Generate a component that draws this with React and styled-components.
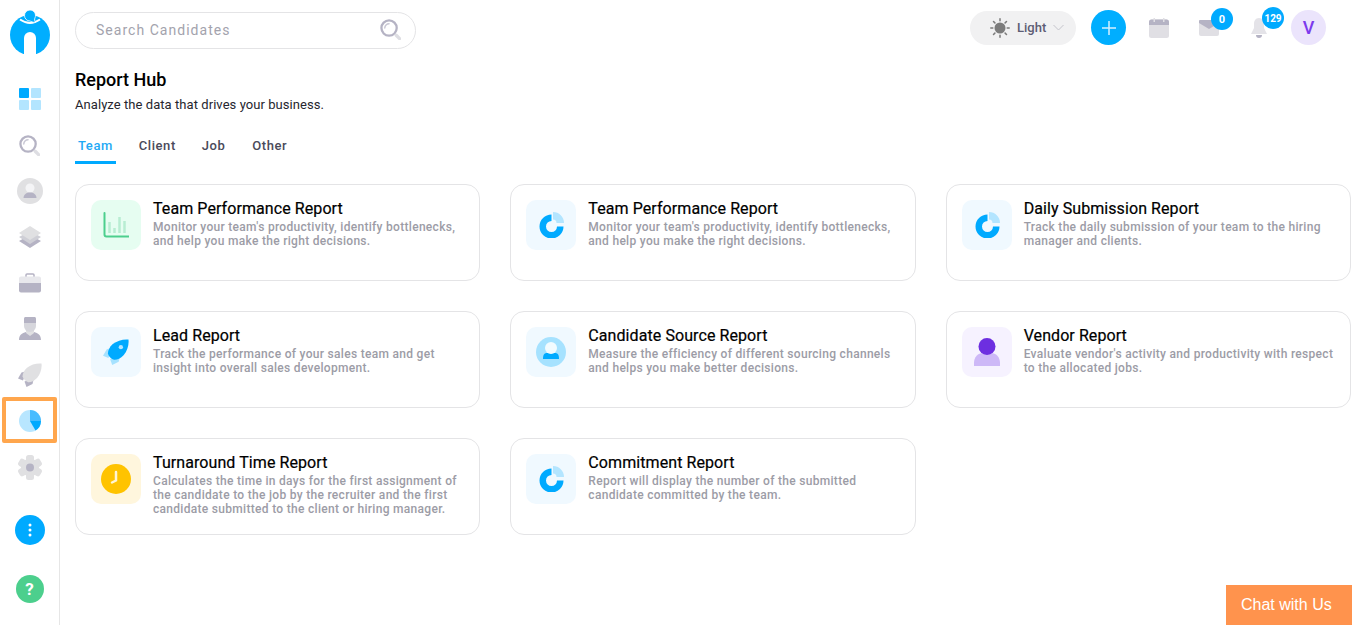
import React from "react";
import styled, { createGlobalStyle } from "styled-components";

const GlobalStyle = createGlobalStyle`
  html, body {
    margin: 0;
    padding: 0;
    background: #fff;
    font-family: Roboto, "Liberation Sans", sans-serif;
  }
  * { box-sizing: border-box; }
`;

const Page = styled.div`
  display: flex;
  width: 1366px;
  height: 625px;
  overflow: hidden;
  position: relative;
`;

const Sidebar = styled.aside`
  width: 60px;
  flex: none;
  border-right: 1px solid #e6e6e6;
  display: flex;
  flex-direction: column;
  align-items: center;
`;

const Logo = styled.div`
  height: 75px;
  padding-top: 10px;
`;

const NavItem = styled.div`
  width: 55px;
  height: 46px;
  padding-top: 2px;
  display: flex;
  align-items: center;
  justify-content: center;
  border: ${(p) => (p.$active ? "4px solid #ffa64d" : "none")};
  border-radius: 2px;
`;

const NavFooter = styled.div`
  margin-top: 26px;
  display: flex;
  flex-direction: column;
  align-items: center;
  gap: 30px;
`;

const RoundBtn = styled.div`
  width: ${(p) => p.$size}px;
  height: ${(p) => p.$size}px;
  border-radius: 50%;
  background: ${(p) => p.$bg};
  font-size: ${(p) => p.$fs || 14}px;
  display: flex;
  align-items: center;
  justify-content: center;
  color: #fff;
  font-weight: 700;
`;

const Main = styled.main`
  flex: 1;
  padding: 12px 15px 0;
  min-width: 0;
`;

const Topbar = styled.header`
  display: flex;
  align-items: flex-start;
  height: 37px;
`;

const Search = styled.div`
  width: 341px;
  height: 37px;
  border: 1px solid #e4e4e6;
  border-radius: 19px;
  display: flex;
  align-items: center;
  justify-content: space-between;
  padding: 0 14px 2px 20px;
  color: #a3a3ad;
  font-size: 14px;
  letter-spacing: 1.03px;
`;

const TopRight = styled.div`
  margin-left: auto;
  margin-right: 25px;
  margin-top: -2px;
  display: flex;
  align-items: center;
`;

const ThemeToggle = styled.div`
  width: 106px;
  height: 34px;
  border-radius: 17px;
  background: #f1f1f2;
  display: flex;
  align-items: center;
  padding-left: 20px;
  color: #5d5d74;
  font-size: 13px;
  font-weight: 500;
  margin-right: 15px;
  gap: 7px;
`;

const TopIcon = styled.div`
  position: relative;
  width: ${(p) => p.$w}px;
  margin-left: ${(p) => p.$ml}px;
  height: 35px;
  display: flex;
  align-items: center;
  justify-content: center;
`;

const Badge = styled.span`
  position: absolute;
  top: ${(p) => p.$top}px;
  left: ${(p) => p.$left}px;
  width: 22px;
  height: 22px;
  border-radius: 50%;
  background: #00aaff;
  color: #fff;
  font-size: ${(p) => p.$fs}px;
  font-weight: 700;
  display: flex;
  align-items: center;
  justify-content: center;
`;

const Avatar = styled.div`
  width: 35px;
  height: 35px;
  border-radius: 50%;
  background: #ebe4fc;
  color: #7c3aed;
  font-size: 18px;
  font-weight: 500;
  display: flex;
  align-items: center;
  justify-content: center;
  margin-left: 24px;
`;

const Title = styled.h1`
  margin: 20px 0 0;
  font-size: 18px;
  line-height: 22px;
  font-weight: 500;
  color: #000;
`;

const Subtitle = styled.p`
  margin: 5px 0 0;
  font-size: 13px;
  line-height: 18px;
  letter-spacing: 0.06px;
  color: #26262e;
`;

const Tabs = styled.nav`
  display: flex;
  margin-top: 17px;
  height: 33px;
`;

const Tab = styled.div`
  padding: 0 3px;
  margin-right: ${(p) => p.$mr}px;
  height: 33px;
  line-height: 30px;
  font-size: 13px;
  font-weight: 500;
  letter-spacing: 0.55px;
  color: ${(p) => (p.$active ? "#1fa9f5" : "#4a4a5a")};
  border-bottom: 3px solid ${(p) => (p.$active ? "#00aaff" : "transparent")};
`;

const Grid = styled.section`
  display: grid;
  grid-template-columns: repeat(3, 1fr);
  gap: 30px;
  margin-top: 20px;
`;

const Card = styled.article`
  height: 97px;
  border: 1px solid #e4e4e6;
  border-radius: 14px;
  padding: 15px;
  display: flex;
  gap: 12px;
`;

const IconBox = styled.div`
  width: 50px;
  height: 50px;
  flex: none;
  border-radius: 10px;
  background: ${(p) => p.$bg};
  display: flex;
  align-items: center;
  justify-content: center;
`;

const CardBody = styled.div`
  margin-top: -1px;
  min-width: 0;
`;

const CardTitle = styled.h3`
  margin: 0;
  font-size: 16px;
  line-height: 19px;
  font-weight: 400;
  letter-spacing: 0.08px;
  color: #000;
  -webkit-text-stroke: 0.2px #000;
`;

const CardText = styled.p`
  margin: 2px 0 0;
  font-size: 12px;
  line-height: 14px;
  font-weight: 500;
  letter-spacing: 0.3px;
  color: #9c9ca6;
`;

const ChatButton = styled.div`
  position: absolute;
  left: 1226px;
  top: 585px;
  width: 126px;
  height: 40px;
  padding-left: 15px;
  background: #ff934d;
  color: #fff;
  font-family: "Liberation Sans", Arial, sans-serif;
  font-size: 16px;
  display: flex;
  align-items: center;
`;

const LogoIcon = () => (
  <svg width="40" height="46" viewBox="0 0 40 46">
    <circle cx="20" cy="25" r="20" fill="#00aeff" />
    <path d="M14 46V28a6 6 0 0 1 12 0v18z" fill="#fff" />
    <path d="M10 9.500c3 2 6.500 3.500 10 3.500s7-1.500 10-3.500" fill="none" stroke="#fff" strokeWidth="2" />
    <path d="M20 0a5.500 5.500 0 0 1 5 7.800c-.6 1.300-.6 3 .5 4.700-2.500-.2-4.500-1-5.500-1.500a5.500 5.500 0 0 1 0-11z" fill="#00aeff" stroke="#fff" strokeWidth=".8" />
  </svg>
);

const Dashboard = () => (
  <svg width="22" height="22" viewBox="0 0 22 22">
    <rect width="10" height="10" rx="1" fill="#00aaff" />
    <rect x="12" width="10" height="10" rx="1" fill="#b3e5ff" />
    <rect y="12" width="10" height="10" rx="1" fill="#b3e5ff" />
    <rect x="12" y="12" width="10" height="10" rx="1" fill="#b3e5ff" />
  </svg>
);

const SearchIcon = () => (
  <svg width="21" height="21" viewBox="0 0 22 22" fill="none">
    <circle cx="9.500" cy="9.500" r="8" stroke="#b5b3c4" strokeWidth="2.400" />
    <path d="M5 9.500A4.500 4.500 0 0 1 9.500 5" stroke="#c9c8d4" strokeWidth="1.500" strokeLinecap="round" />
    <path d="M17 17l3.500 3.500" stroke="#dedee3" strokeWidth="3.500" strokeLinecap="round" />
  </svg>
);

const Candidate = () => (
  <svg width="26" height="26" viewBox="0 0 26 26">
    <circle cx="13" cy="13" r="13" fill="#e0e0e2" />
    <circle cx="13" cy="10" r="4.500" fill="#f4f4f6" />
    <path d="M6.500 20c0-3.500 3-5.500 6.500-5.500s6.500 2 6.500 5.500z" fill="#b5b3c4" />
  </svg>
);

const Layers = () => (
  <svg width="22" height="23" viewBox="0 0 22 23">
    <path d="M11 9 22 15 11 22 0 15z" fill="#b5b3c4" />
    <path d="M11 5 22 11 11 18 0 11z" fill="#cfcfd6" />
    <path d="M0 7 11 0l11 7-11 7z" fill="#e0e0e2" />
  </svg>
);

const Briefcase = () => (
  <svg width="22" height="20" viewBox="0 0 22 20">
    <path d="M7 4V2a1 1 0 0 1 1-1h6a1 1 0 0 1 1 1v2" fill="none" stroke="#b5b3c4" strokeWidth="1.500" />
    <path d="M2 3.500h18a2 2 0 0 1 2 2V10H0V5.500a2 2 0 0 1 2-2z" fill="#e8e8ec" />
    <path d="M0 10h22v7.500a2 2 0 0 1-2 2H2a2 2 0 0 1-2-2z" fill="#b5b3c4" />
  </svg>
);

const Person = () => (
  <svg width="22" height="24" viewBox="0 0 22 24">
    <path d="M0 23c0-5 3-7 7-8l4 3 4-3c4 1 7 3 7 8z" fill="#b5b3c4" />
    <path d="M7 13h8v3l-4 3-4-3z" fill="#e0e0e2" />
    <path d="M5 1.500C5 .7 5.700 0 6.500 0h9c.8 0 1.500.7 1.500 1.500V6H5z" fill="#b5b3c4" />
    <path d="M5 6h12v3a6 6 0 0 1-12 0z" fill="#d6d6dc" />
  </svg>
);

const Rocket = ({ size = 24, body = "#e0e0e2", fin = "#b5b3c4", win }) => (
  <svg width={size} height={size} viewBox="0 0 24 24">
    <path d="M0 15.500 3.500 9.500 9 8 5 17.500z" fill={fin} />
    <path d="M8.500 24l6-3 1.500-6-9.500 3.500z" fill={fin} />
    <path d="M23.500.5c.6 5-1 10.500-4.500 14.500-2.800 3-6.500 4.500-8.800 4.200-2.500-.7-5-3.200-5.600-5.700-.2-2.300 1.300-6 4.400-8.800C13 1.500 18.500 0 23.500.5z" fill={body} />
    {win && <circle cx="16.500" cy="7.500" r="2" fill={win} />}
  </svg>
);

const PieNav = () => (
  <svg width="22" height="22" viewBox="0 0 22 22">
    <circle cx="11" cy="11" r="11" fill="#b8e6ff" />
    <path d="M11 0a11 11 0 0 1 11 11H11z" fill="#47bcff" />
    <path d="M11 11h11a11 11 0 0 1-5.500 9.500z" fill="#00aaff" />
  </svg>
);

const Gear = () => (
  <svg width="24" height="25" viewBox="0 0 24 25">
    <g fill="#e0e0e2" transform="translate(12 12.500)">
      <circle r="9" />
      <rect x="-4" y="-12.500" width="8" height="25" rx="2.500" />
      <rect x="-4" y="-12.500" width="8" height="25" rx="2.500" transform="rotate(60)" />
      <rect x="-4" y="-12.500" width="8" height="25" rx="2.500" transform="rotate(120)" />
    </g>
    <circle cx="12" cy="12.500" r="4" fill="#b5b3c4" />
  </svg>
);

const Dots = () => (
  <svg width="4" height="14" viewBox="0 0 4 14" fill="#fff">
    <circle cx="2" cy="2" r="1.500" />
    <circle cx="2" cy="7" r="1.500" />
    <circle cx="2" cy="12" r="1.500" />
  </svg>
);

const Sun = () => (
  <svg width="20" height="20" viewBox="0 0 20 20">
    <circle cx="10" cy="10" r="5.500" fill="#7c7c7c" />
    <g stroke="#7c7c7c" strokeWidth="1.500" strokeLinecap="round">
      <path d="M10 .8v2M10 17.200v2M.8 10h2M17.200 10h2M3.500 3.500l1.400 1.400M15.100 15.100l1.400 1.400M3.500 16.500l1.400-1.400M15.100 4.900l1.400-1.400" />
    </g>
  </svg>
);

const Chevron = () => (
  <svg width="11" height="7" viewBox="0 0 11 7" fill="none">
    <path d="M.5 1l5 5 5-5" stroke="#c4c4cb" strokeWidth="1" />
  </svg>
);

const Plus = () => (
  <svg width="16" height="16" viewBox="0 0 16 16" stroke="#d5efff" strokeWidth="1.500">
    <path d="M8 1v14M1 8h14" />
  </svg>
);

const CalendarIcon = () => (
  <svg width="20" height="20" viewBox="0 0 20 20">
    <rect y="1.500" width="20" height="18.500" rx="2.500" fill="#e0dfe4" />
    <path d="M2.500 1.500h15A2.500 2.500 0 0 1 20 4v3H0V4a2.500 2.500 0 0 1 2.500-2.500z" fill="#b5b3c4" />
    <rect x="4.500" width="1.500" height="4" fill="#e0dfe4" />
    <rect x="14" width="1.500" height="4" fill="#e0dfe4" />
  </svg>
);

const MailIcon = () => (
  <svg width="20" height="16" viewBox="0 0 20 16">
    <rect width="20" height="16" rx="2" fill="#e0dfe4" />
    <path d="M1 0h18a1 1 0 0 1 1 1v2l-10 6L0 3V1a1 1 0 0 1 1-1z" fill="#b5b3c4" />
  </svg>
);

const BellIcon = () => (
  <svg width="16" height="22" viewBox="0 0 16 22">
    <path d="M8 1c3.500 0 5 3 5 6v4l3 6H0l3-6V7c0-3 1.500-6 5-6z" fill="#e4e3e8" />
    <path d="M5 18h6a3 3 0 0 1-6 0z" fill="#b5b3c4" />
  </svg>
);

const BarsIcon = () => (
  <svg width="26" height="26" viewBox="0 0 26 26" fill="none">
    <path d="M1.500 1v21.500a2 2 0 0 0 2 2h22" stroke="#4ccf8d" strokeWidth="2" strokeLinecap="round" />
    <g stroke="#b8edd2" strokeWidth="2.500">
      <path d="M6.500 10v11M11.500 16v5M16.500 5v16M21.500 9v12" />
    </g>
  </svg>
);

const DonutIcon = () => (
  <svg width="26" height="26" viewBox="0 0 26 26">
    <path d="M13.500 2.500a12 12 0 1 0 12 12h-6.500a5.500 5.500 0 1 1-5.500-5.500z" fill="#00aaff" />
    <path d="M15 0a11 11 0 0 1 11 11h-7.500a3.500 3.500 0 0 0-3.500-3.500z" fill="#b3e5ff" />
  </svg>
);

const SourceIcon = () => (
  <svg width="30" height="30" viewBox="0 0 30 30">
    <circle cx="15" cy="15" r="15" fill="#a6e2ff" />
    <path d="M7 22c0-4 1-6 4-6h8c3 0 4 2 4 6z" fill="#00aaff" />
    <circle cx="15" cy="11" r="6" fill="#f2fbff" />
  </svg>
);

const VendorIcon = () => (
  <svg width="26" height="28" viewBox="0 0 26 28">
    <path d="M0 28v-3c0-6 4-10 9-10h8c5 0 9 4 9 10v3z" fill="#cdb8f7" />
    <circle cx="13" cy="8.500" r="8.500" fill="#6d2fe0" />
  </svg>
);

const ClockIcon = () => (
  <svg width="30" height="30" viewBox="0 0 30 30">
    <circle cx="15" cy="15" r="15" fill="#ffc300" />
    <path d="M15 8v8.500l-4 2" fill="none" stroke="#fff5d6" strokeWidth="2.500" strokeLinecap="round" strokeLinejoin="round" />
  </svg>
);

const BLUE = "#f0f9ff";

const reports = [
  {
    title: "Team Performance Report",
    text: "Monitor your team's productivity, identify bottlenecks, and help you make the right decisions.",
    bg: "#e6fdf1",
    icon: <BarsIcon />,
  },
  {
    title: "Team Performance Report",
    text: "Monitor your team's productivity, identify bottlenecks, and help you make the right decisions.",
    bg: BLUE,
    icon: <DonutIcon />,
  },
  {
    title: "Daily Submission Report",
    text: "Track the daily submission of your team to the hiring manager and clients.",
    bg: BLUE,
    icon: <DonutIcon />,
  },
  {
    title: "Lead Report",
    text: "Track the performance of your sales team and get insight into overall sales development.",
    bg: BLUE,
    icon: <Rocket size={26} body="#00aaff" fin="#a6e2ff" win="#b3e5ff" />,
  },
  {
    title: "Candidate Source Report",
    text: "Measure the efficiency of different sourcing channels and helps you make better decisions.",
    bg: BLUE,
    icon: <SourceIcon />,
  },
  {
    title: "Vendor Report",
    text: "Evaluate vendor's activity and productivity with respect to the allocated jobs.",
    bg: "#f6f2ff",
    icon: <VendorIcon />,
  },
  {
    title: "Turnaround Time Report",
    text: "Calculates the time in days for the first assignment of the candidate to the job by the recruiter and the first candidate submitted to the client or hiring manager.",
    bg: "#fff6dd",
    icon: <ClockIcon />,
  },
  {
    title: "Commitment Report",
    text: "Report will display the number of the submitted candidate committed by the team.",
    bg: BLUE,
    icon: <DonutIcon />,
  },
];

const navIcons = [
  <Dashboard />,
  <SearchIcon />,
  <Candidate />,
  <Layers />,
  <Briefcase />,
  <Person />,
  <Rocket />,
];

export default function App() {
  return (
    <Page>
      <GlobalStyle />
      <Sidebar>
        <Logo>
          <LogoIcon />
        </Logo>
        {navIcons.map((icon, i) => (
          <NavItem key={i}>{icon}</NavItem>
        ))}
        <NavItem $active>
          <PieNav />
        </NavItem>
        <NavItem>
          <Gear />
        </NavItem>
        <NavFooter>
          <RoundBtn $size={30} $bg="#00aaff">
            <Dots />
          </RoundBtn>
          <RoundBtn $size={28} $bg="#4ccf8d" $fs={17}>
            ?
          </RoundBtn>
        </NavFooter>
      </Sidebar>
      <Main>
        <Topbar>
          <Search>
            Search Candidates
            <SearchIcon />
          </Search>
          <TopRight>
            <ThemeToggle>
              <Sun />
              Light
              <Chevron />
            </ThemeToggle>
            <RoundBtn $size={35} $bg="#00aeff">
              <Plus />
            </RoundBtn>
            <TopIcon $w={20} $ml={23}>
              <CalendarIcon />
            </TopIcon>
            <TopIcon $w={20} $ml={30}>
              <MailIcon />
              <Badge $top={-2} $left={12} $fs={11}>0</Badge>
            </TopIcon>
            <TopIcon $w={16} $ml={32}>
              <BellIcon />
              <Badge $top={-3} $left={11} $fs={10}>129</Badge>
            </TopIcon>
            <Avatar>V</Avatar>
          </TopRight>
        </Topbar>
        <Title>Report Hub</Title>
        <Subtitle>Analyze the data that drives your business.</Subtitle>
        <Tabs>
          <Tab $active $mr={20}>Team</Tab>
          <Tab $mr={20}>Client</Tab>
          <Tab $mr={21}>Job</Tab>
          <Tab>Other</Tab>
        </Tabs>
        <Grid>
          {reports.map((r, i) => (
            <Card key={i}>
              <IconBox $bg={r.bg}>{r.icon}</IconBox>
              <CardBody>
                <CardTitle>{r.title}</CardTitle>
                <CardText>{r.text}</CardText>
              </CardBody>
            </Card>
          ))}
        </Grid>
      </Main>
      <ChatButton>Chat with Us</ChatButton>
    </Page>
  );
}
